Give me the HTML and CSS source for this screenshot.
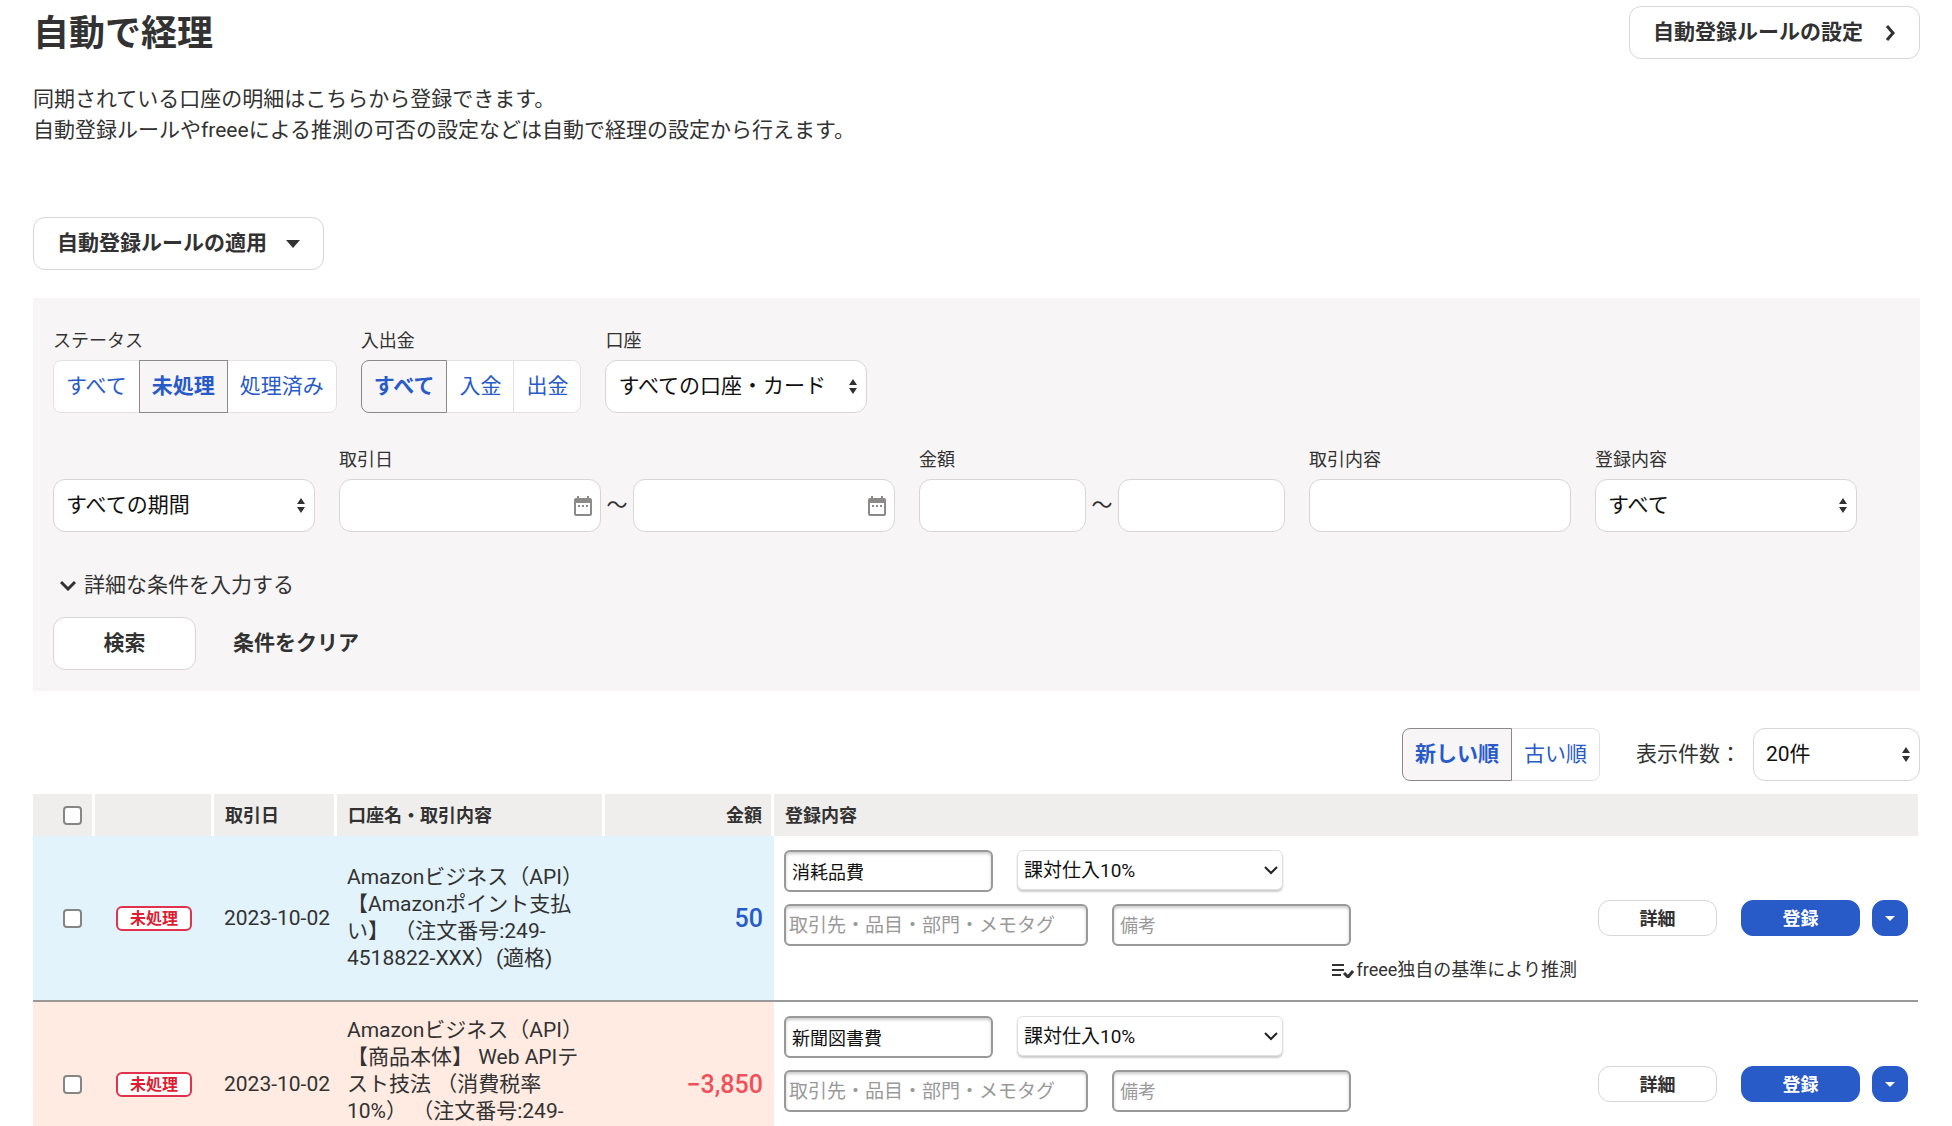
FILE: index.html
```html
<!DOCTYPE html>
<html lang="ja">
<head>
  <meta charset="UTF-8">
  <meta name="viewport" content="width=device-width, initial-scale=1.0">
  <title>自動で経理</title>
  <link rel="stylesheet" href="styles.css">
</head>
<body>
    <header class="page-header">
        <h1>自動で経理</h1>
        <a class="btn btn-wide" href="#">自動登録ルールの設定
            <svg width="11" height="18" viewBox="0 0 11 18" fill="none" stroke="#323232" stroke-width="3"><path d="M2 2l6 7-6 7"/></svg>
        </a>
    </header>

    <main>
        <p class="lead">同期されている口座の明細はこちらから登録できます。<br>自動登録ルールやfreeeによる推測の可否の設定などは自動で経理の設定から行えます。</p>

        <button type="button" class="btn btn-wide">自動登録ルールの適用
            <svg width="14" height="8" viewBox="0 0 14 8"><path d="M0 0h14L7 8z" fill="#323232"/></svg>
        </button>

        <form class="filter">
            <div class="filter-row">
                <div class="field">
                    <span class="label">ステータス</span>
                    <div class="segment">
                        <button type="button">すべて</button>
                        <button type="button" class="selected">未処理</button>
                        <button type="button">処理済み</button>
                    </div>
                </div>
                <div class="field">
                    <span class="label">入出金</span>
                    <div class="segment">
                        <button type="button" class="selected">すべて</button>
                        <button type="button">入金</button>
                        <button type="button">出金</button>
                    </div>
                </div>
                <div class="field">
                    <label class="label" for="walletable">口座</label>
                    <select id="walletable" class="control"><option>すべての口座・カード</option></select>
                </div>
            </div>

            <div class="filter-row">
                <div class="field">
                    <select class="control" aria-label="期間"><option>すべての期間</option></select>
                </div>
                <div class="field">
                    <label class="label" for="dateFrom">取引日</label>
                    <div class="range">
                        <div class="date">
                            <input type="text" id="dateFrom" class="control">
                            <svg width="18" height="20" viewBox="0 0 18 20"><path d="M3 0h2v2h8V0h2v2h1q2 0 2 2v14q0 2-2 2H2q-2 0-2-2V4q0-2 2-2h1zM2 7v11h14V7z" fill="#8c8989" fill-rule="evenodd"/><path d="M4 9h2v2H4zM8 9h2v2H8zM12 9h2v2h-2z" fill="#8c8989"/></svg>
                        </div>
                        <span class="tilde">〜</span>
                        <div class="date">
                            <input type="text" class="control" aria-label="取引日（終了）">
                            <svg width="18" height="20" viewBox="0 0 18 20"><path d="M3 0h2v2h8V0h2v2h1q2 0 2 2v14q0 2-2 2H2q-2 0-2-2V4q0-2 2-2h1zM2 7v11h14V7z" fill="#8c8989" fill-rule="evenodd"/><path d="M4 9h2v2H4zM8 9h2v2H8zM12 9h2v2h-2z" fill="#8c8989"/></svg>
                        </div>
                    </div>
                </div>
                <div class="field">
                    <label class="label" for="amountFrom">金額</label>
                    <div class="range">
                        <input type="text" id="amountFrom" class="control control-short">
                        <span class="tilde">〜</span>
                        <input type="text" class="control control-short" aria-label="金額（上限）">
                    </div>
                </div>
                <div class="field">
                    <label class="label" for="content">取引内容</label>
                    <input type="text" id="content" class="control">
                </div>
                <div class="field">
                    <label class="label" for="registered">登録内容</label>
                    <select id="registered" class="control"><option>すべて</option></select>
                </div>
            </div>

            <button type="button" class="more">
                <svg width="16" height="11" viewBox="0 0 16 11" fill="none" stroke="#323232" stroke-width="3"><path d="M1 2l7 7 7-7"/></svg>
                詳細な条件を入力する
            </button>

            <div class="filter-actions">
                <button type="button" class="btn btn-search">検索</button>
                <button type="button" class="clear">条件をクリア</button>
            </div>
        </form>

        <div class="list-tools">
            <div class="segment">
                <button type="button" class="selected">新しい順</button>
                <button type="button">古い順</button>
            </div>
            <label class="per-page" for="perPage">表示件数：</label>
            <select id="perPage" class="control control-short"><option>20件</option></select>
        </div>

        <table class="deals">
            <colgroup>
                <col class="col-check">
                <col class="col-status">
                <col class="col-date">
                <col class="col-content">
                <col class="col-amount">
                <col>
            </colgroup>
            <thead>
                <tr>
                    <th class="check"><input type="checkbox" aria-label="すべて選択"></th>
                    <th></th>
                    <th>取引日</th>
                    <th>口座名・取引内容</th>
                    <th class="amount-head">金額</th>
                    <th>登録内容</th>
                </tr>
            </thead>
            <tbody>
                <tr class="income">
                    <td class="check"><input type="checkbox" aria-label="明細を選択"></td>
                    <td class="status"><span class="badge">未処理</span></td>
                    <td class="day">2023-10-02</td>
                    <td>Amazonビジネス（API）<br>【Amazonポイント支払<br>い】 （注文番号:249-<br>4518822-XXX）(適格)</td>
                    <td class="amount">50</td>
                    <td class="entry">
                        <div class="entry-inner">
                            <div class="entry-fields">
                                <div class="entry-row">
                                    <input type="text" class="account" value="消耗品費" aria-label="勘定科目">
                                    <select class="tax" aria-label="税区分"><option>課対仕入10%</option></select>
                                </div>
                                <div class="entry-row">
                                    <input type="text" class="tags" placeholder="取引先・品目・部門・メモタグ" aria-label="タグ">
                                    <input type="text" class="note" placeholder="備考" aria-label="備考">
                                </div>
                                <p class="guess">
                                    <svg width="22" height="16" viewBox="0 0 22 16" fill="none" stroke="#323232" stroke-width="2"><path d="M0 3h12M0 8h12M0 13h9"/><path d="M12 11l4 4 5-6" stroke-width="3"/></svg>
                                    freee独自の基準により推測
                                </p>
                            </div>
                            <div class="entry-actions">
                                <button type="button" class="btn-small">詳細</button>
                                <button type="button" class="btn-small btn-primary">登録</button>
                                <button type="button" class="btn-small btn-primary btn-caret" aria-label="その他の登録方法">
                                    <svg width="10" height="5" viewBox="0 0 10 5"><path d="M0 0h10L5 5z" fill="#fff"/></svg>
                                </button>
                            </div>
                        </div>
                    </td>
                </tr>
                <tr class="expense">
                    <td class="check"><input type="checkbox" aria-label="明細を選択"></td>
                    <td class="status"><span class="badge">未処理</span></td>
                    <td class="day">2023-10-02</td>
                    <td>Amazonビジネス（API）<br>【商品本体】 Web APIテ<br>スト技法 （消費税率<br>10%） （注文番号:249-<br>&nbsp;</td>
                    <td class="amount">−3,850</td>
                    <td class="entry">
                        <div class="entry-inner">
                            <div class="entry-fields">
                                <div class="entry-row">
                                    <input type="text" class="account" value="新聞図書費" aria-label="勘定科目">
                                    <select class="tax" aria-label="税区分"><option>課対仕入10%</option></select>
                                </div>
                                <div class="entry-row">
                                    <input type="text" class="tags" placeholder="取引先・品目・部門・メモタグ" aria-label="タグ">
                                    <input type="text" class="note" placeholder="備考" aria-label="備考">
                                </div>
                            </div>
                            <div class="entry-actions">
                                <button type="button" class="btn-small">詳細</button>
                                <button type="button" class="btn-small btn-primary">登録</button>
                                <button type="button" class="btn-small btn-primary btn-caret" aria-label="その他の登録方法">
                                    <svg width="10" height="5" viewBox="0 0 10 5"><path d="M0 0h10L5 5z" fill="#fff"/></svg>
                                </button>
                            </div>
                        </div>
                    </td>
                </tr>
            </tbody>
        </table>
    </main>
</body>
</html>
```
FILE: styles.css
```css
:root {
    --text: #323232;
    --blue: #285ac8;
    --line: #d7d5d5;
    --line-dark: #8c8989;
    --panel: #f7f5f6;
}

* {
    box-sizing: border-box;
}

html, body {
    height: 100%;
    overflow: hidden;
}

body {
    margin: 0;
    padding: 6px 32px 0 33px;
    font-family: Roboto, "Noto Sans CJK JP", sans-serif;
    font-size: 21px;
    line-height: 31px;
    color: var(--text);
    background: #fff;
}

button, input, select {
    font: inherit;
    color: inherit;
    margin: 0;
}

button {
    cursor: pointer;
    white-space: nowrap;
}

svg {
    flex: none;
}

.page-header {
    display: flex;
    justify-content: space-between;
}

h1 {
    margin: 0;
    font-size: 36px;
    line-height: 56px;
}

.lead {
    margin: 22px 0 71px;
}

.btn {
    display: flex;
    align-items: center;
    justify-content: center;
    height: 53px;
    padding: 0 23px;
    border: 1px solid var(--line);
    border-radius: 12px;
    background: #fff;
    color: var(--text);
    font-weight: bold;
    text-decoration: none;
}

.btn-wide {
    width: 291px;
    justify-content: space-between;
}

/* Search panel */
.filter {
    margin-top: 28px;
    padding: 31px 20px 21px;
    background: var(--panel);
}

.filter-row {
    display: flex;
    align-items: flex-end;
    gap: 24px;
    margin-bottom: 35px;
}

.label {
    display: block;
    margin-bottom: 7px;
    font-size: 18px;
    line-height: 24px;
}

.control {
    display: block;
    width: 262px;
    height: 53px;
    padding: 0 12px;
    border: 1px solid var(--line);
    border-radius: 12px;
    background: #fff;
    color: #111;
}

.control-short {
    width: 167px;
}

select {
    appearance: none;
}

select.control {
    background: #fff url("data:image/svg+xml,%3Csvg xmlns='http://www.w3.org/2000/svg' width='8' height='15'%3E%3Cpath d='M0 6l4-6 4 6zM0 9l4 6 4-6z' fill='%23323232'/%3E%3C/svg%3E") no-repeat right 9px center;
}

.range {
    display: flex;
    align-items: center;
}

.tilde {
    width: 32px;
    text-align: center;
}

.date {
    position: relative;
}

.date svg {
    position: absolute;
    right: 9px;
    top: 17px;
}

.segment {
    display: flex;
}

.segment button {
    height: 53px;
    padding: 0 12px;
    border: 1px solid #e3e1e1;
    background: #fff;
    color: var(--blue);
}

.segment button + button {
    margin-left: -1px;
}

.segment button:first-child {
    border-radius: 8px 0 0 8px;
}

.segment button:last-child {
    border-radius: 0 8px 8px 0;
}

.segment .selected {
    position: relative;
    border-color: var(--line-dark);
    background: var(--panel);
    font-weight: bold;
}

.more {
    display: flex;
    align-items: center;
    gap: 8px;
    margin: 38px 0 16px;
    padding: 0 7px;
    border: none;
    background: none;
}

.filter-actions {
    display: flex;
    align-items: center;
    gap: 37px;
}

.btn-search {
    width: 143px;
}

.clear {
    padding: 0;
    border: none;
    background: none;
    font-weight: bold;
}

/* Sort order and page size */
.list-tools {
    display: flex;
    align-items: center;
    justify-content: flex-end;
    margin: 37px 0 13px;
}

.per-page {
    margin: 0 12px 0 36px;
}

/* Deals table */
.deals {
    width: 100%;
    padding-right: 2px;
    table-layout: fixed;
    border-spacing: 0;
    line-height: 27px;
}

.col-check { width: 62px; }
.col-status { width: 119px; }
.col-date { width: 123px; }
.col-content { width: 268px; }
.col-amount { width: 169px; }

.deals th {
    height: 42px;
    padding: 0 11px;
    border-right: 3px solid #fff;
    background: #efeeec;
    font-size: 18px;
    text-align: left;
}

.deals th:last-child {
    border-right: none;
}

.deals .amount-head {
    padding-right: 9px;
    text-align: right;
}

.deals td {
    height: 166px;
    padding: 0 0 0 10px;
    border-bottom: 2px solid #999;
    white-space: nowrap;
}

.deals .check {
    padding: 0 0 0 30px;
}

.income td {
    background: #e3f3fb;
}

.expense td {
    background: #ffebe2;
}

.deals input[type="checkbox"] {
    appearance: none;
    display: block;
    width: 19px;
    height: 19px;
    border: 2px solid #858585;
    border-radius: 4px;
    background: #fff;
}

.deals .status {
    padding-left: 21px;
}

.badge {
    display: block;
    width: 76px;
    border: 2px solid #e2314d;
    border-radius: 6px;
    background: #fff;
    color: #dc1e32;
    font-size: 16px;
    font-weight: bold;
    line-height: 21px;
    text-align: center;
}

.deals .amount {
    padding-right: 11px;
    font-size: 25px;
    font-weight: 500;
    text-align: right;
}

.income .amount {
    color: var(--blue);
}

.expense .amount {
    color: #f0505a;
}

.deals .entry {
    padding: 0 10px;
    background: #fff;
}

.entry-inner {
    display: flex;
    align-items: center;
    justify-content: space-between;
    height: 164px;
}

.entry-fields {
    width: 793px;
    height: 100%;
    padding-top: 14px;
}

.entry-row {
    display: flex;
    gap: 24px;
    margin-bottom: 12px;
}

.entry-row input {
    height: 42px;
    padding: 0 6px;
    border: 2px solid #999;
    border-radius: 6px;
    background: #fff;
    box-shadow: inset 0 2px 3px #ccc;
    color: #111;
    font-size: 18px;
}

.entry-row input::placeholder {
    color: #999;
}

.entry-row .account {
    width: 209px;
}

.entry-row .tags {
    width: 304px;
    padding: 0 3px;
    font-size: 19px;
}

.entry-row .note {
    width: 239px;
}

.tax {
    width: 266px;
    height: 40px;
    padding: 0 6px;
    border: 1px solid #e1dfdf;
    border-radius: 6px;
    background: #fff url("data:image/svg+xml,%3Csvg xmlns='http://www.w3.org/2000/svg' width='14' height='9'%3E%3Cpath d='M1 1l6 6 6-6' fill='none' stroke='%23222' stroke-width='2'/%3E%3C/svg%3E") no-repeat right 4px center;
    box-shadow: 0 2px 2px #ccc;
    color: #111;
    font-size: 19px;
}

.guess {
    display: flex;
    align-items: center;
    justify-content: flex-end;
    gap: 3px;
    margin: 0;
    font-size: 18px;
    line-height: 24px;
}

.entry-actions {
    display: flex;
    gap: 12px;
}

.btn-small {
    width: 119px;
    height: 36px;
    padding: 0;
    border: 1px solid var(--line);
    border-radius: 12px;
    background: #fff;
    font-size: 18px;
    font-weight: bold;
    line-height: 27px;
}

.btn-primary {
    border-color: var(--blue);
    background: var(--blue);
    color: #fff;
}

.btn-small:first-child {
    margin-right: 12px;
}

.btn-caret {
    display: flex;
    align-items: center;
    justify-content: center;
    width: 36px;
}
```
